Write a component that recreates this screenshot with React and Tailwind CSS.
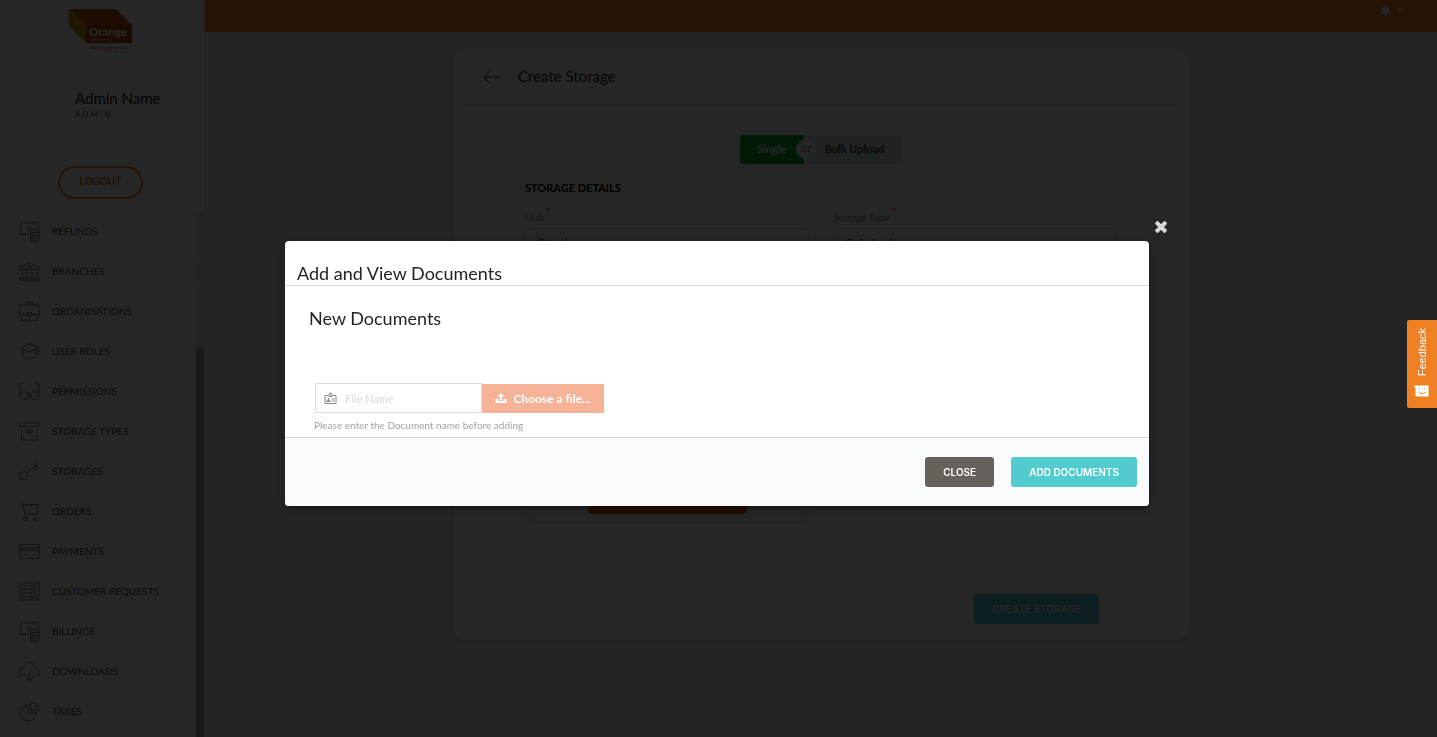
import { FaBell, FaCaretDown } from "react-icons/fa";
import { LuChevronDown } from "react-icons/lu";

const money = (
  <>
    <path d="M10 13H1.500V1.500H18V6.500" />
    <circle cx="9.500" cy="7.500" r="1.600" />
    <ellipse cx="15" cy="9.500" rx="4" ry="1.500" />
    <path d="M11 9.500V17.500C11 19.700 19 19.700 19 17.500V9.500M11 12.300C11 14.400 19 14.400 19 12.300M11 15C11 17.100 19 17.100 19 15" />
  </>
);

const items = [
  { label: "REFUNDS", icon: money },
  {
    label: "BRANCHES",
    icon: (
      <>
        <path d="M1 8 V6 L10 1.500 L19 6 V8 Z M1 18.500 V16.500 H19 V18.500 Z M3 10 V16 M7.500 10 V16 M12.500 10 V16 M17 10 V16" />
        <circle cx="10" cy="5.500" r="1" />
      </>
    ),
  },
  {
    label: "ORGANISATIONS",
    icon: (
      <path d="M8 13H1V4H19V13H12M7 4V1.500H13V4M8 11H12V14.500H8ZM2 14.500V18.500H18V14.500" />
    ),
  },
  {
    label: "USER ROLES",
    icon: (
      <path d="M1.500 6.500 L10 2.500 L18.500 6.500 L10 10.500 Z M4 8V13.500C4 17.500 16 17.500 16 13.500V8M18.500 8V13.500" />
    ),
  },
  {
    label: "PERMISSIONS",
    icon: (
      <>
        <circle cx="5" cy="14" r="3.800" />
        <circle cx="15" cy="14" r="3.800" />
        <path d="M8.500 13Q10 12 11.500 13M1 13V3.500Q1 1.500 4.500 1.500M19 13V3.500Q19 1.500 15.500 1.500" />
      </>
    ),
  },
  {
    label: "STORAGE TYPES",
    icon: <path d="M1 1.500H19V5.500H1ZM2.500 7V18H17.500V7M7.500 9H12.500V11.500H7.500Z" />,
  },
  {
    label: "STORAGES",
    icon: (
      <>
        <circle cx="4.500" cy="14" r="3.800" />
        <path d="M7.500 11.300 L17.500 2M13 6L16 9L18.500 6.500L15.500 3.800" />
      </>
    ),
  },
  {
    label: "ORDERS",
    icon: (
      <>
        <path d="M1 1.500H3.500L5.500 12.500H17L18.500 3.500H4" />
        <circle cx="6" cy="17" r="1.600" />
        <circle cx="15.500" cy="17" r="1.600" />
      </>
    ),
  },
  {
    label: "PAYMENTS",
    icon: <path d="M1 3.500H19V16.500H1ZM1 6.500H19M1 9H19M3.500 13H8.500M13.500 13H16" />,
  },
  {
    label: "CUSTOMER REQUESTS",
    icon: (
      <path d="M1 1.500H12.500V4.500H1ZM1 8H12.500V11.500H1ZM1 15H12.500V18H1ZM15.500 1.500H19V18H15.500Z" />
    ),
  },
  { label: "BILLINGS", icon: money },
  {
    label: "DOWNLOADS",
    icon: (
      <path d="M7 14H5C-0.500 14-0.500 7 4.500 7C5 -0.500 15 -0.500 15.500 7C20.500 7 20.500 14 15 14H13M10 8.500V18.500M6.500 15.500L10 18.700L13.500 15.500" />
    ),
  },
  {
    label: "TAXES",
    icon: <path d="M8.500 4A7.500 7.500 0 1 0 16.500 11.500H8.500ZM11 1.500V9H19A7.500 7.500 0 0 0 11 1.500Z" />,
  },
];

function Logo() {
  return (
    <svg viewBox="0 0 66 44" className="h-11 w-[66px]" role="img" aria-label="Orange Self Storage">
      <path d="M1 1H48L64 17H18Z" fill="#c8500a" />
      <path d="M1 1L18 17V35L1 18Z" fill="#d39a08" />
      <path d="M18 17H64V35H18Z" fill="#b83c06" />
      <text x="21" y="28" fontSize="11.500" fontWeight="900" fontFamily="Lato, sans-serif" fill="#fff">Orange</text>
      <text x="22" y="33" fontSize="4.500" fontFamily="Lato, sans-serif" fill="#fff">Self Storage</text>
      <text x="22" y="41" fontSize="4.500" fontWeight="700" fontFamily="Lato, sans-serif" fill="#d23c10">extra space for you</text>
      <path d="M18 43H63" stroke="#bbb" strokeWidth="0.500" />
    </svg>
  );
}

function Sidebar() {
  return (
    <aside className="flex h-full w-[205px] shrink-0 flex-col border-r border-[#d5d5d5] bg-white">
      <div className="flex h-[211px] shrink-0 flex-col">
        <div className="pt-2 pl-[68px]"><Logo /></div>
        <div className="pt-9 pl-[75px]">
          <div className="text-[15px] leading-5 text-[#252525]">Admin Name</div>
          <div className="text-[8px] leading-3 tracking-[2px] text-[#555]">ADMIN</div>
        </div>
        <button className="mt-[46px] ml-[58px] h-[33px] w-[85px] shrink-0 rounded-full border-2 border-[#ef8022] pb-0.5 font-['Inter'] text-[10px] font-semibold text-[#d66a14]">
          LOGOUT
        </button>
      </div>
      <div className="flex min-h-0 flex-1">
        <nav className="relative min-w-0 flex-1 overflow-hidden">
          {items.map((item) => (
            <a key={item.label} href="#" className="flex h-10 items-center gap-3 pt-px pl-[19px] text-[10px] text-[#444]">
              <svg viewBox="0 0 20 20" className="size-[21px]" fill="none" stroke="#8a8a8a" strokeWidth="1.100">
                {item.icon}
              </svg>
              <span>{item.label}</span>
            </a>
          ))}
          <div className="absolute top-12 right-0 border-y-[12px] border-r-[12px] border-y-transparent border-r-[#f4f3ef]" />
        </nav>
        <div className="w-2 bg-[#e6e6e6] pt-[137px]">
          <div className="h-full rounded-t-full bg-[#a8a8a8]" />
        </div>
      </div>
    </aside>
  );
}

function Select({ id, label, value }) {
  return (
    <div className="flex flex-col">
      <label htmlFor={id} className="text-[10px] leading-[22px] text-[#888]">
        {label}
        <sup className="ml-0.5 text-[11px] text-[#e00]">*</sup>
      </label>
      <div className="relative">
        <select id={id} className="h-[30px] w-full appearance-none rounded border border-[#d4d4d4] bg-white px-3 text-xs text-[#222]">
          <option>{value}</option>
        </select>
        <LuChevronDown className="pointer-events-none absolute top-2 right-2 size-4 text-[#333]" />
      </div>
    </div>
  );
}

function StorageForm() {
  return (
    <section className="flex w-full max-w-[736px] flex-col rounded-xl bg-white px-3 pb-4 shadow-[0_2px_6px_rgba(0,0,0,0.2)]">
      <header className="flex h-[56px] items-center gap-[18px] border-b border-[#dcdcdc] pl-[18px]">
        <button aria-label="Back">
          <svg viewBox="0 0 17 14" className="h-3.5 w-[17px]" fill="none" stroke="#333" strokeWidth="1">
            <path d="M7 1L1 7L7 13M1 7H17" />
          </svg>
        </button>
        <h1 className="text-[15px] text-[#222]">Create Storage</h1>
      </header>
      <div className="relative mt-[30px] flex h-[29px] justify-center gap-[3px] text-[11px] font-bold">
        <button className="w-16 rounded-l bg-[#16a83b] pr-px text-white">Single</button>
        <button className="w-[95px] rounded-r bg-[#dce0e2] text-[#444]">Bulk Upload</button>
        <span className="absolute top-1 left-1/2 -ml-[25px] flex size-5 items-center justify-center rounded-full bg-white pb-0.5 text-[11px] font-normal text-[#777]">
          or
        </span>
      </div>
      <div className="px-[60px]">
        <h2 className="mt-3.5 text-[11px] leading-5 font-bold text-black">STORAGE DETAILS</h2>
        <div className="mt-2 grid grid-cols-2 gap-6">
          <Select id="hub" label="Hub" value="Regular" />
          <Select id="type" label="Storage Type" value="Safe Lockers" />
        </div>
        <div className="mt-6 grid grid-cols-2 gap-6">
          <div className="flex h-[242px] items-end justify-center rounded-xl border-2 border-[#e3e3e3] pb-2">
            <button className="h-[30px] w-[159px] rounded bg-[#d96c00] text-xs text-white">Add Documents</button>
          </div>
        </div>
      </div>
      <div className="mt-[70px] flex justify-end pr-[78px]">
        <button className="h-[30px] rounded-[3px] bg-[#51cbce] px-[18px] font-['Inter'] text-[10px] font-semibold text-white">
          CREATE STORAGE
        </button>
      </div>
    </section>
  );
}

function DocumentsModal() {
  return (
    <div className="fixed inset-0 flex items-center justify-center bg-black/85 pt-2.5 pr-[3px]">
      <div role="dialog" aria-labelledby="dialog-title" className="relative w-full max-w-[864px] rounded bg-white shadow-[1px_3px_3px_rgba(0,0,0,0.2),1px_3px_15px_2px_rgba(0,0,0,0.2)]">
        <button aria-label="Close dialog" className="absolute -top-5 -right-[18px]">
          <svg viewBox="0 0 12 12" className="size-3" stroke="#d9d9d9" strokeWidth="4">
            <path d="M2.500 2.500L9.500 9.500M9.500 2.500L2.500 9.500" strokeLinecap="square" strokeLinejoin="round" />
          </svg>
        </button>
        <header className="border-b border-[#d8dadb] px-3 pt-5">
          <h2 id="dialog-title" className="text-lg leading-6 text-[#252422]">Add and View Documents</h2>
        </header>
        <div className="px-6 pt-5">
          <h3 className="text-lg leading-6 text-[#252422]">New Documents</h3>
          <div className="mt-[53px] flex items-end px-1.5">
            <div className="flex h-[30px] w-[167px] items-center gap-2 border border-[#dcdcdc] px-2">
              <svg viewBox="0 0 13 13" className="size-[13px] shrink-0" fill="none" stroke="#888" strokeWidth="1">
                <path d="M4.500 3.500H1V11.500H12V3.500H8.500M5 4.500V2.500H5.800V1H7.200V2.500H8V4.500ZM7.500 7H10.500M7.500 9H10.500" />
                <path d="M2.500 10V8.800L4 8L3.500 6.500Q4.500 5.300 5.500 6.500L5 8L6.500 8.800V10Z" fill="#888" stroke="none" />
              </svg>
              <input aria-label="File Name" placeholder="File Name" className="w-full min-w-0 pt-0.5 text-[11px] outline-none placeholder:text-[#dadada]" />
            </div>
            <button className="flex h-[29px] w-[122px] items-center justify-center gap-1.5 bg-[#f6b296] text-xs font-bold text-white">
              <svg viewBox="0 0 12 12" className="size-3" fill="#fff">
                <path d="M6 0L9.500 3.500H7V7H5V3.500H2.500ZM0.500 6H3.500V7.500Q3.500 8 4 8H8Q8.500 8 8.500 7.500V6H11.500V9Q11.500 10 10.500 10H1.500Q0.500 10 0.500 9Z" />
              </svg>
              Choose a file...
            </button>
          </div>
          <p className="h-6 pt-1 pl-[5px] text-[10px] leading-4 text-[#a3a3a3]">Please enter the Document name before adding</p>
        </div>
        <footer className="flex justify-end gap-[17px] rounded-b border-t border-[#d4d8da] bg-[#f9fafc] px-3 py-[19px] font-['Inter'] text-[10px] font-semibold text-white">
          <button className="h-[30px] rounded-[3px] bg-[#66615b] px-[18px]">CLOSE</button>
          <button className="h-[30px] rounded-[3px] bg-[#51cbce] px-[18px]">ADD DOCUMENTS</button>
        </footer>
      </div>
    </div>
  );
}

export default function App() {
  return (
    <div className="flex h-screen overflow-hidden bg-[#f2f2f2] font-['Lato',sans-serif]">
      <Sidebar />
      <main className="min-w-0 flex-1">
        <header className="flex h-8 items-start justify-end gap-1 bg-[#f47e20] pt-1 pr-[31px] text-white">
          <FaBell className="mt-px size-[11px]" />
          <FaCaretDown className="size-[11px]" />
        </header>
        <div className="flex justify-center pt-[17px]">
          <StorageForm />
        </div>
      </main>
      <DocumentsModal />
      <button className="fixed top-80 right-0 flex h-[88px] w-[30px] flex-col items-center justify-end gap-2 rounded-l-[2px] bg-[#ee7f22] pb-2.5 text-white">
        <span className="rotate-180 font-['Liberation_Sans'] text-[11px] leading-4 [writing-mode:vertical-rl]">Feedback</span>
        <svg viewBox="0 0 16 14" className="h-3.5 w-4">
          <path d="M0 1.500H14.500V12.500H3Q1.500 12.500 1.500 11V4.500Z" fill="#fff" />
          <path d="M5.500 4.500V5.500M10.500 4.500V5.500" stroke="#ee7f22" strokeWidth="1.200" />
          <path d="M4.500 8Q8 11.500 11.500 8" stroke="#ee7f22" fill="none" />
        </svg>
      </button>
    </div>
  );
}
